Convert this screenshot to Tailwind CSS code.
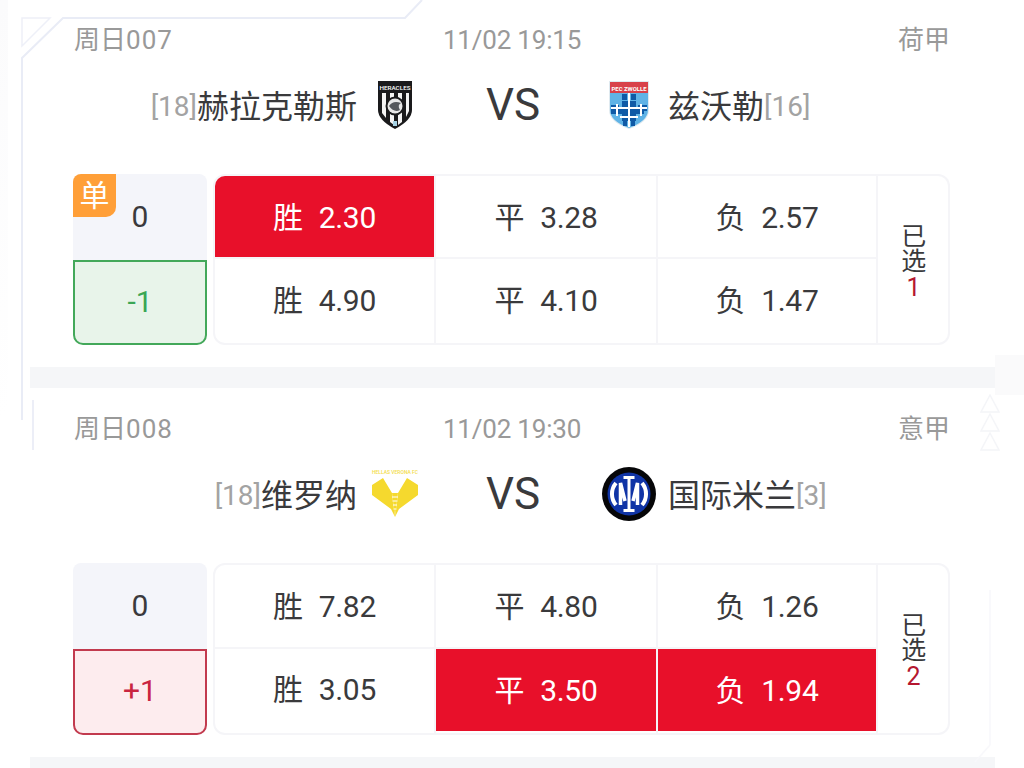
<!DOCTYPE html>
<html lang="zh-CN">
<head>
  <meta charset="UTF-8">
  <meta name="viewport" content="width=device-width, initial-scale=1.0">
  <title>竞彩足球</title>
  <script src="https://cdn.jsdelivr.net/npm/@tailwindcss/browser@4"></script>
</head>
<body class="bg-white font-['Roboto','Noto_Sans_CJK_SC',sans-serif]">
  <div class="relative w-[1024px] h-[768px] overflow-hidden bg-white">
    <!-- 左右两侧的浅色底 -->
    <div class="absolute left-0 top-0 w-[8px] h-[420px] bg-linear-to-b from-[#fbfbfc] to-white"></div>
    <div class="absolute left-[995px] top-[355px] w-[29px] h-[40px] bg-[#fafafb]"></div>

    <div class="relative ml-[30px] w-[965px]">
      <!-- 周日007 -->
      <section class="pt-[26px] pl-[43px] pr-[45px] pb-[22px] bg-white">
        <div class="grid grid-cols-[1fr_auto_1fr] items-center h-[29px] pl-[1px] text-[26px] leading-[29px] text-[#999999]">
          <span>周日<span class="tracking-[1px]">007</span></span>
          <span class="tracking-[-0.2px]">11/02 19:15</span>
          <span class="text-right">荷甲</span>
        </div>
        <div class="mt-[20px] h-[60px] grid grid-cols-[349px_180px_348px] items-center">
          <div class="flex items-center justify-end">
            <span class="mt-[3px] text-[28px] leading-[40px] text-[#a3a3a3]">[18]</span>
            <span class="mt-[3px] text-[32px] leading-[40px] text-[#3a3a3c]">赫拉克勒斯</span>
            <span class="ml-[11px] w-[54px] h-[54px] flex items-center justify-center">
              <svg width="36" height="50" viewBox="0 0 36 50">
                <path d="M1 1H35V30Q35 40 18 49Q1 40 1 30Z" fill="#1a1a1c"/>
                <path d="M5 13H9V38L5 33ZM13 13H17V45L13 42ZM21 13H25V42L21 45ZM29 13H32V31L29 37Z" fill="#f4f4f4"/>
                <text x="18" y="9.500" text-anchor="middle" font-size="5.500" font-weight="500" fill="#fff" textLength="31" lengthAdjust="spacingAndGlyphs">HERACLES</text>
                <circle cx="18" cy="26" r="9.500" fill="#1a1a1c"/>
                <circle cx="18" cy="26" r="7.500" fill="#e8e8e8"/>
                <path d="M12 26Q16 20 24 23Q20 25 23 30Q17 33 12 26Z" fill="#55585c"/>
                <path d="M16 41H20V46H16Z" fill="#a8d4e6"/>
              </svg>
            </span>
          </div>
          <div class="pl-[2px] text-center text-[44px] leading-[50px] text-[#3a3a3c]">VS</div>
          <div class="flex items-center">
            <span class="w-[54px] h-[54px] flex items-center justify-center">
              <svg width="42" height="50" viewBox="0 0 42 50">
                <path d="M1 1H41V30Q41 42 21 49Q1 42 1 30Z" fill="#dfeaf0"/>
                <path d="M2 2H40V13H2Z" fill="#d8414a"/>
                <text x="21" y="10.500" text-anchor="middle" font-size="5.500" font-weight="700" fill="#fff" textLength="35" lengthAdjust="spacingAndGlyphs">PEC ZWOLLE</text>
                <path d="M2 13H40V30Q40 41 21 48Q2 41 2 30Z" fill="#5fb3e6"/>
                <path d="M14 14H19V20H14ZM23 14H28V20H23ZM14 21H28V28H36V34H28V41H14V34H3V28H14Z" fill="#0f5aa6"/>
                <path d="M30 25H39V31H30ZM3 25H11V27H3ZM15 41H19V46H15ZM23 41H27V46H23Z" fill="#0f5aa6"/>
                <path d="M20 13H22V47H20ZM3 27H39V29H3ZM8 24H10V36H8ZM32 24H34V36H32ZM12 36H30V38H12Z" fill="#ffffff"/>
              </svg>
            </span>
            <span class="ml-[12px] mt-[3px] text-[32px] leading-[40px] text-[#3a3a3c]">兹沃勒</span>
            <span class="mt-[3px] text-[28px] leading-[40px] text-[#a3a3a3]">[16]</span>
          </div>
        </div>
        <div class="mt-[39px] flex gap-[6px] h-[171px]">
          <div class="relative w-[134px] flex flex-col">
            <div class="h-[86px] pb-[2px] rounded-t-[8px] bg-[#f4f5fa] flex items-center justify-center text-[30px] text-[#3a3a3c]">0</div>
            <div class="flex-1 pb-[3px] rounded-b-[10px] border-2 border-[#43a85a] bg-[#e8f4ea] flex items-center justify-center text-[30px] text-[#3aa655]">-1</div>
            <div class="absolute left-0 top-0 w-[43px] h-[43px] rounded-tl-[8px] rounded-br-[10px] bg-[#ff9f38] flex items-center justify-center text-[30px] leading-none text-white">单</div>
          </div>
          <div class="flex-1 rounded-[12px] bg-[#f5f5f8] p-[2px] grid grid-cols-[219px_220px_218px_1fr] grid-rows-[81px_1fr] gap-[2px] text-[30px] tracking-[-0.3px] text-[#3a3a3c]">
            <div class="pt-[1px] rounded-tl-[10px] bg-[#e8102a] text-white flex items-center justify-center gap-[16px]"><span>胜</span><span>2.30</span></div>
            <div class="pt-[1px] bg-white flex items-center justify-center gap-[16px]"><span>平</span><span>3.28</span></div>
            <div class="pt-[1px] bg-white flex items-center justify-center gap-[16px]"><span>负</span><span>2.57</span></div>
            <div class="row-span-2 pt-[4px] pl-[1px] rounded-r-[10px] bg-white flex flex-col items-center justify-center text-[25px] leading-[25px]">
              <span>已</span><span>选</span><span class="mt-[1px] text-[#b5172f]">1</span>
            </div>
            <div class="pb-[2px] rounded-bl-[10px] bg-white flex items-center justify-center gap-[16px]"><span>胜</span><span>4.90</span></div>
            <div class="pb-[2px] bg-white flex items-center justify-center gap-[16px]"><span>平</span><span>4.10</span></div>
            <div class="pb-[2px] bg-white flex items-center justify-center gap-[16px]"><span>负</span><span>1.47</span></div>
          </div>
        </div>
      </section>
      <div class="h-[21px] bg-[#f5f6f8]"></div>

      <!-- 周日008 -->
      <section class="pt-[27px] pl-[43px] pr-[45px] pb-[22px] bg-white">
        <div class="grid grid-cols-[1fr_auto_1fr] items-center h-[29px] pl-[1px] text-[26px] leading-[29px] text-[#999999]">
          <span>周日<span class="tracking-[1px]">008</span></span>
          <span class="tracking-[-0.2px]">11/02 19:30</span>
          <span class="text-right">意甲</span>
        </div>
        <div class="mt-[20px] h-[60px] grid grid-cols-[349px_180px_348px] items-center">
          <div class="flex items-center justify-end">
            <span class="mt-[3px] text-[28px] leading-[40px] text-[#a3a3a3]">[18]</span>
            <span class="mt-[3px] text-[32px] leading-[40px] text-[#3a3a3c]">维罗纳</span>
            <span class="ml-[11px] w-[54px] h-[54px] flex items-center justify-center">
              <svg width="50" height="50" viewBox="0 0 50 50">
                <text x="25" y="5" text-anchor="middle" font-size="4.500" font-weight="500" fill="#f3dc4a" textLength="46" lengthAdjust="spacingAndGlyphs">HELLAS VERONA FC</text>
                <path d="M2 16L13 9L22 24L25 48L21 40L2 26Z" fill="#f5d92e"/>
                <path d="M48 16L37 9L28 24L25 48L29 40L48 26Z" fill="#f5d92e"/>
                <path d="M22 24H28L25 48Z" fill="#f5d92e"/>
                <path d="M22 28H28M22.500 32H27.500M23 36H27M23.500 40H26.500" stroke="#ffffff" stroke-width="1" fill="none"/>
              </svg>
            </span>
          </div>
          <div class="pl-[2px] text-center text-[44px] leading-[50px] text-[#3a3a3c]">VS</div>
          <div class="flex items-center">
            <span class="w-[54px] h-[54px] flex items-center justify-center">
              <svg width="54" height="54" viewBox="0 0 54 54">
                <circle cx="27" cy="27" r="27" fill="#060608"/>
                <circle cx="27" cy="27" r="21.500" fill="#1034a6"/>
                <g fill="none" stroke="#ffffff" stroke-width="3.500">
                  <path d="M27 11V43M21.500 10.500H32.500M21.500 43.500H32.500" stroke-width="3"/>
                  <path d="M14 16A17 17 0 0 0 14 38" stroke-width="4"/>
                  <path d="M40 16A17 17 0 0 1 40 38" stroke-width="4"/>
                  <path d="M18.500 38V16L23 34"/>
                  <path d="M35.500 38V16L31 34"/>
                </g>
              </svg>
            </span>
            <span class="ml-[12px] mt-[3px] text-[32px] leading-[40px] text-[#3a3a3c]">国际米兰</span>
            <span class="mt-[3px] text-[28px] leading-[40px] text-[#a3a3a3]">[3]</span>
          </div>
        </div>
        <div class="mt-[39px] flex gap-[6px] h-[172px]">
          <div class="w-[134px] flex flex-col">
            <div class="h-[86px] pb-[2px] rounded-t-[8px] bg-[#f4f5fa] flex items-center justify-center text-[30px] text-[#3a3a3c]">0</div>
            <div class="flex-1 pb-[3px] rounded-b-[10px] border-2 border-[#c23a4e] bg-[#fdecee] flex items-center justify-center text-[30px] text-[#c9243f]">+1</div>
          </div>
          <div class="flex-1 rounded-[12px] bg-[#f5f5f8] p-[2px] grid grid-cols-[219px_220px_218px_1fr] grid-rows-[82px_1fr] gap-[2px] text-[30px] tracking-[-0.3px] text-[#3a3a3c]">
            <div class="rounded-tl-[10px] bg-white flex items-center justify-center gap-[16px]"><span>胜</span><span>7.82</span></div>
            <div class="bg-white flex items-center justify-center gap-[16px]"><span>平</span><span>4.80</span></div>
            <div class="bg-white flex items-center justify-center gap-[16px]"><span>负</span><span>1.26</span></div>
            <div class="row-span-2 pt-[4px] pl-[1px] rounded-r-[10px] bg-white flex flex-col items-center justify-center text-[25px] leading-[25px]">
              <span>已</span><span>选</span><span class="mt-[1px] text-[#b5172f]">2</span>
            </div>
            <div class="pb-[3px] rounded-bl-[10px] bg-white flex items-center justify-center gap-[16px]"><span>胜</span><span>3.05</span></div>
            <div class="bg-[#e8102a] border-b-2 border-white text-white flex items-center justify-center gap-[16px]"><span>平</span><span>3.50</span></div>
            <div class="bg-[#e8102a] border-b-2 border-white text-white flex items-center justify-center gap-[16px]"><span>负</span><span>1.94</span></div>
          </div>
        </div>
      </section>
      <div class="h-[11px] bg-[#f5f6f8]"></div>
    </div>

    <!-- 背景装饰线 -->
    <svg class="absolute inset-0 pointer-events-none" width="1024" height="768" viewBox="0 0 1024 768" fill="none">
      <path d="M422 0L405 18H63L22 58V420" stroke="#e9ecf6" stroke-width="2"/>
      <path d="M22 18H50L22 46Z" stroke="#eef0f8" stroke-width="1.500"/>
      <path d="M33 400V450" stroke="#eceef7" stroke-width="2"/>
      <path d="M990 395L981 412H999ZM990 414L981 431H999ZM990 433L981 450H999Z" stroke="#f4f5f8" stroke-width="1.500"/>
      <path d="M990 590V745L975 762" stroke="#f8f8fb" stroke-width="1.500"/>
    </svg>
  </div>
</body>
</html>
